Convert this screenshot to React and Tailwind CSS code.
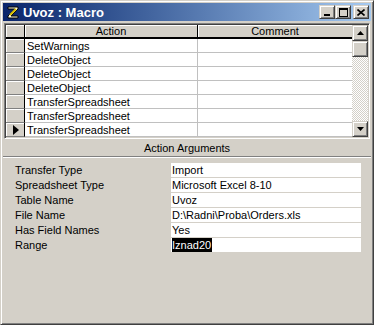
import React from 'react';

const raised =
  'border border-t-[#d4d0c8] border-l-[#d4d0c8] border-r-[#404040] border-b-[#404040] shadow-[inset_1px_1px_0_#fff,inset_-1px_-1px_0_#808080]';

const actions = [
  'SetWarnings',
  'DeleteObject',
  'DeleteObject',
  'DeleteObject',
  'TransferSpreadsheet',
  'TransferSpreadsheet',
  'TransferSpreadsheet',
];

const args = [
  ['Transfer Type', 'Import'],
  ['Spreadsheet Type', 'Microsoft Excel 8-10'],
  ['Table Name', 'Uvoz'],
  ['File Name', 'D:\\Radni\\Proba\\Orders.xls'],
  ['Has Field Names', 'Yes'],
  ['Range', 'Iznad20'],
];

function MacroIcon() {
  return (
    <svg width="16" height="16" viewBox="0 0 16 16" className="shrink-0">
      <path d="M3 3h10v2L6 12h7v2H3v-2l7-7H3z" fill="#fffbe0" stroke="#000" strokeWidth="1" />
      <path d="M5 11l6-6" stroke="#d8c000" strokeWidth="2" />
    </svg>
  );
}

function TitleButton({ children, className = '' }) {
  return (
    <div className={`w-[16px] h-[14px] bg-[#d4d0c8] flex items-center justify-center ${raised} ${className}`}>
      {children}
    </div>
  );
}

function ScrollButton({ down }) {
  return (
    <div className={`w-[16px] h-[16px] shrink-0 bg-[#d4d0c8] flex items-center justify-center ${raised}`}>
      <svg width="7" height="4" viewBox="0 0 7 4">
        {down ? <path d="M0 0h7L3.5 4z" fill="#000" /> : <path d="M0 4h7L3.5 0z" fill="#000" />}
      </svg>
    </div>
  );
}

export default function App() {
  return (
    <div
      className={`w-[374px] h-[325px] bg-[#d4d0c8] p-[2px] flex flex-col text-[11px] text-black ${raised}`}
      style={{ fontFamily: '"Liberation Sans", Arial, sans-serif' }}
    >
      {/* title bar */}
      <div className="h-[18px] shrink-0 flex items-center pl-[2px] pr-[2px] bg-linear-to-r from-[#0a246a] to-[#a6caf0]">
        <MacroIcon />
        <span className="ml-[2px] text-white font-bold text-[13px] leading-none">Uvoz : Macro</span>
        <div className="ml-auto flex items-center">
          <TitleButton>
            <div className="w-[6px] h-[2px] bg-black mt-[6px] mr-[1px]" />
          </TitleButton>
          <TitleButton>
            <div className="w-[9px] h-[9px] border border-black border-t-2" />
          </TitleButton>
          <TitleButton className="ml-[2px]">
            <svg width="8" height="7" viewBox="0 0 8 7">
              <path d="M0.5 0.5l7 6M7.5 0.5l-7 6" stroke="#000" strokeWidth="1.6" />
            </svg>
          </TitleButton>
        </div>
      </div>

      {/* macro grid */}
      <div className="mt-[2px] mx-[1px] h-[116px] shrink-0 p-[1px] border border-t-[#808080] border-l-[#808080] border-r-white border-b-white shadow-[inset_1px_1px_0_#404040,inset_-1px_-1px_0_#d4d0c8] flex">
        <div className="flex-1 flex flex-col bg-white">
          <div className="h-[14px] flex bg-[#d4d0c8] border-b-2 border-black">
            <div className="w-[19px] border-r border-black shadow-[inset_1px_1px_0_#fff]" />
            <div className="w-[173px] border-r border-black flex items-center justify-center leading-none pt-[1px] shadow-[inset_1px_1px_0_#fff]">Action</div>
            <div className="flex-1 flex items-center justify-center leading-none pt-[1px] shadow-[inset_1px_1px_0_#fff]">Comment</div>
          </div>
          {actions.map((a, i) => (
            <div key={i} className="h-[14px] flex">
              <div className="w-[19px] bg-[#d4d0c8] border-r border-black border-b border-b-[#808080] shadow-[inset_1px_1px_0_#fff] flex items-center justify-center">
                {i === actions.length - 1 && (
                  <svg width="6" height="10" viewBox="0 0 6 10" className="ml-[1px]">
                    <path d="M0 0L6 5L0 10z" fill="#000" />
                  </svg>
                )}
              </div>
              <div className="w-[173px] border-r border-b border-[#c0c0c0] flex items-center pl-[2px] pt-[1px] leading-none">{a}</div>
              <div className="flex-1 border-b border-[#c0c0c0]" />
            </div>
          ))}
        </div>
        <div className="w-[16px] flex flex-col">
          <ScrollButton />
          <div className={`w-[16px] h-[16px] shrink-0 bg-[#d4d0c8] ${raised}`} />
          <div className="flex-1 bg-[repeating-conic-gradient(#d4d0c8_0_25%,#ffffff_0_50%)] bg-size-[2px_2px]" />
          <ScrollButton down />
        </div>
      </div>

      {/* action arguments */}
      <div className="h-[17px] shrink-0 flex items-center justify-center leading-none pt-[1px]">Action Arguments</div>
      <div className="h-[1px] bg-[#808080] shrink-0" />
      <div className="h-[1px] bg-white shrink-0" />

      <div className="mt-[5px] flex flex-col gap-[1px]">
        {args.map(([label, value]) => (
          <div key={label} className="h-[14px] flex items-center">
            <span className="pl-[12px] leading-none pt-[1px]">{label}</span>
            <div className="ml-auto mr-[10px] w-[190px] h-[14px] bg-white flex items-center pl-[1px] leading-none">
              {label === 'Range' ? (
                <span className="bg-black text-white h-[14px] flex items-center pt-[1px] pr-[1px]">{value}</span>
              ) : (
                <span className="pt-[1px]">{value}</span>
              )}
            </div>
          </div>
        ))}
      </div>
    </div>
  );
}
